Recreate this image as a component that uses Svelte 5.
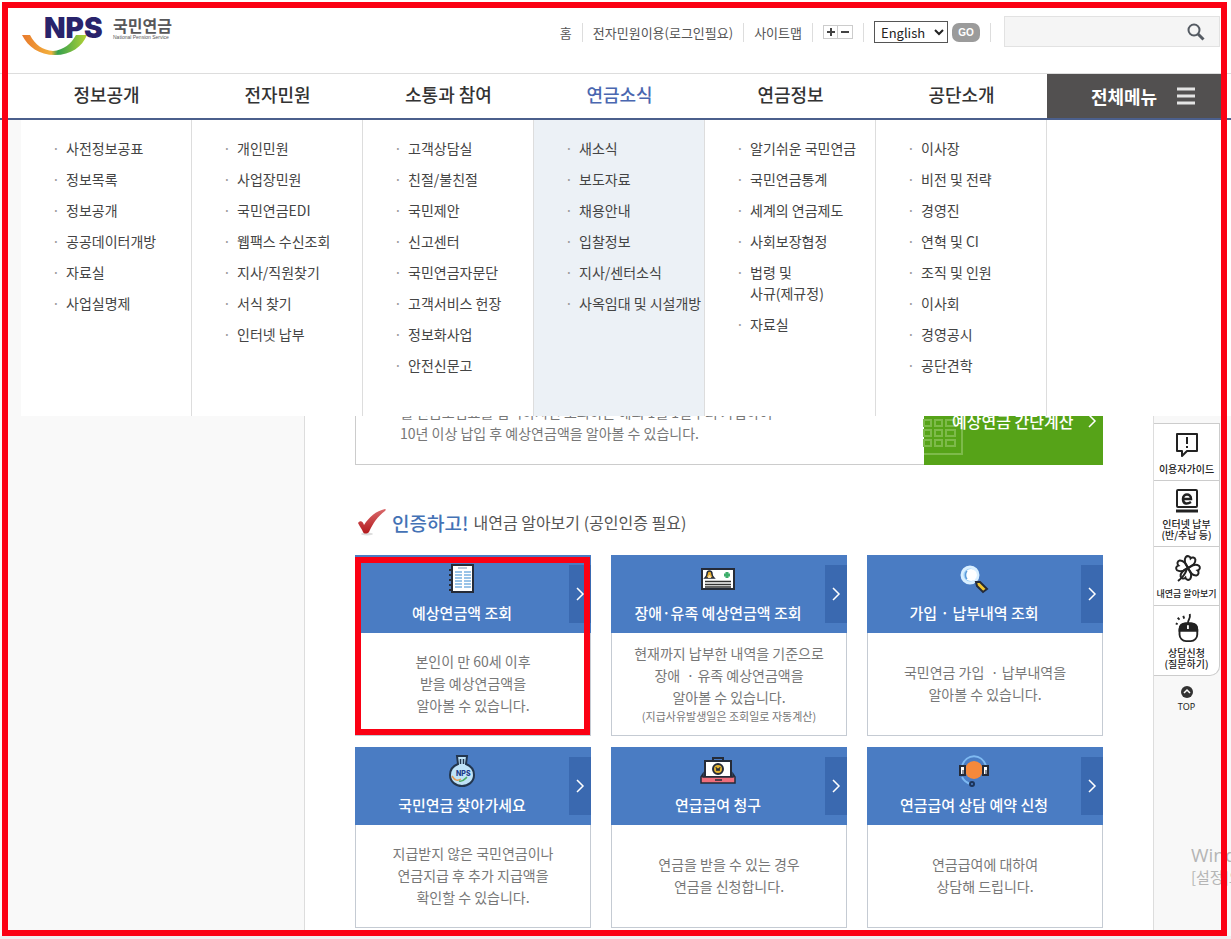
<script>
  let language = $state("English");
  let keyword = $state("");

  const menus = [
    {
      title: "정보공개",
      items: ["사전정보공표", "정보목록", "정보공개", "공공데이터개방", "자료실", "사업실명제"],
    },
    {
      title: "전자민원",
      items: ["개인민원", "사업장민원", "국민연금EDI", "웹팩스 수신조회", "지사/직원찾기", "서식 찾기", "인터넷 납부"],
    },
    {
      title: "소통과 참여",
      items: ["고객상담실", "친절/불친절", "국민제안", "신고센터", "국민연금자문단", "고객서비스 헌장", "정보화사업", "안전신문고"],
    },
    {
      title: "연금소식",
      active: true,
      items: ["새소식", "보도자료", "채용안내", "입찰정보", "지사/센터소식", "사옥임대 및 시설개방"],
    },
    {
      title: "연금정보",
      items: ["알기쉬운 국민연금", "국민연금통계", "세계의 연금제도", "사회보장협정", "법령 및\n사규(제규정)", "자료실"],
    },
    {
      title: "공단소개",
      items: ["이사장", "비전 및 전략", "경영진", "연혁 및 CI", "조직 및 인원", "이사회", "경영공시", "공단견학"],
    },
  ];

  const cards = [
    {
      icon: "note",
      title: "예상연금액 조회",
      lines: ["본인이 만 60세 이후", "받을 예상연금액을", "알아볼 수 있습니다."],
      marked: true,
    },
    {
      icon: "idcard",
      title: "장애·유족 예상연금액 조회",
      lines: ["현재까지 납부한 내역을 기준으로", "장애  · 유족 예상연금액을", "알아볼 수 있습니다."],
      small: "(지급사유발생일은 조회일로 자동계산)",
    },
    {
      icon: "magnifier",
      title: "가입 · 납부내역 조회",
      lines: ["국민연금 가입  · 납부내역을", "알아볼 수 있습니다."],
    },
    {
      icon: "bag",
      title: "국민연금 찾아가세요",
      lines: ["지급받지 않은 국민연금이나", "연금지급 후 추가 지급액을", "확인할 수 있습니다."],
    },
    {
      icon: "box",
      title: "연급급여 청구",
      lines: ["연금을 받을 수 있는 경우", "연금을 신청합니다."],
    },
    {
      icon: "headset",
      title: "연금급여 상담 예약 신청",
      lines: ["연금급여에 대하여", "상담해 드립니다."],
    },
  ];
</script>

<div class="page">
  <header>
    <div class="top">
      <a class="logo" href="#home">
        <svg width="88" height="42" viewBox="0 0 88 42">
          <defs>
            <linearGradient id="smile">
              <stop offset="0" stop-color="#e8792c" />
              <stop offset="0.45" stop-color="#f3b13c" />
              <stop offset="0.55" stop-color="#35a04e" />
              <stop offset="1" stop-color="#b5d334" />
            </linearGradient>
          </defs>
          <path d="M1 19h8c5 10 13 15 23 16 11-1 18-7 23-16h11C61 31 50 39 34 39 18 39 7 31 1 19z" fill="url(#smile)" />
          <text class="nps" x="23" y="22">NPS</text>
        </svg>
        <span class="name">
          <span class="ko">국민연금</span>
          <span class="en">National Pension Service</span>
        </span>
      </a>
      <ul class="util">
        <li><a href="#home">홈</a></li>
        <li><a href="#minwon">전자민원이용(로그인필요)</a></li>
        <li><a href="#sitemap">사이트맵</a></li>
        <li class="zoom">
          <button aria-label="글자 크게">
            <svg width="8" height="8" viewBox="0 0 8 8"><path d="M0 4h8M4 0v8" stroke="#444" stroke-width="2" /></svg>
          </button>
          <button aria-label="글자 작게">
            <svg width="8" height="8" viewBox="0 0 8 8"><path d="M0 4h8" stroke="#444" stroke-width="2" /></svg>
          </button>
        </li>
        <li class="lang">
          <select bind:value={language} aria-label="Language">
            <option>English</option>
            <option>中文</option>
            <option>日本語</option>
          </select>
          <button class="go">GO</button>
        </li>
      </ul>
      <form class="search" onsubmit={(e) => e.preventDefault()}>
        <input type="text" bind:value={keyword} aria-label="검색어" />
        <button aria-label="검색">
          <svg width="18" height="18" viewBox="0 0 18 18" fill="none" stroke="#555b63">
            <circle cx="7" cy="7" r="5.5" stroke-width="2" />
            <path d="M11 11l5.500 5.500" stroke-width="3" />
          </svg>
        </button>
      </form>
    </div>

    <nav class="gnb">
      {#each menus as menu}
        <a href="#menu" class:active={menu.active}>{menu.title}</a>
      {/each}
      <button class="all">
        <span>전체메뉴</span>
        <svg width="18" height="18" viewBox="0 0 18 18"><path d="M0 2h18M0 9h18M0 16h18" stroke="#e4e4e4" stroke-width="3" /></svg>
      </button>
    </nav>

    <div class="submenu">
      {#each menus as menu}
        <ul class:active={menu.active}>
          {#each menu.items as item}
            <li><a href="#sub">{item}</a></li>
          {/each}
        </ul>
      {/each}
    </div>
  </header>

  <div class="body">
    <div class="side"></div>

    <main>
      <section class="intro">
        <p>월 연금보험료를 입력하시면 조회하는 해의 1월 1일부터 가입하여<br />10년 이상 납입 후 예상연금액을 알아볼 수 있습니다.</p>
        <a class="calc" href="#calc">
          <svg class="calc-bg" width="40" height="56" viewBox="0 0 40 56" fill="none" stroke="#7dba4a">
            <path d="M0 1h38v53H0" stroke-width="2" />
            <path d="M0 20h7v6H0zM11 20h7v6h-7zM22 20h9v6h-9zM0 30h7v6H0zM11 30h7v6h-7zM22 30h9v6h-9zM0 40h7v6H0zM11 40h7v6h-7zM22 40h9v6h-9z" stroke-width="2" />
          </svg>
          <span>예상연금 간단계산</span>
          <svg width="9" height="14" viewBox="0 0 9 14"><path d="M1 1l6 6-6 6" fill="none" stroke="#fff" stroke-width="1.500" /></svg>
        </a>
      </section>

      <h2>
        <svg width="32" height="28" viewBox="0 0 32 28">
          <defs>
            <linearGradient id="tick" x2="0" y2="1">
              <stop offset="0" stop-color="#d9696b" />
              <stop offset="1" stop-color="#b3181c" />
            </linearGradient>
          </defs>
          <ellipse cx="12" cy="26" rx="6" ry="1.500" fill="#ddd" />
          <path d="M3 15c2-3 5-2 6 2C14 9 21 3 30 1c1 0 1 1 0 2-7 5-12 12-16 21-2 2-5 2-6 0-1-3-3-5-5-9z" fill="url(#tick)" />
        </svg>
        <strong>인증하고!</strong>
        <span>내연금 알아보기 (공인인증 필요)</span>
      </h2>

      <div class="cards">
        {#each cards as card}
          <a href="#card" class="card" class:marked={card.marked}>
            <div class="head">
              <div class="title">
                <div class="icon">
                  {#if card.icon === "note"}
                    <svg width="26" height="30" viewBox="0 0 26 30">
                      <path d="M3 1h21v27H3z" fill="#fff" stroke="#252b38" stroke-width="2" />
                      <path d="M0 6h4M0 11h4M0 16h4M0 21h4M0 26h4" stroke="#252b38" stroke-width="2" />
                      <path d="M9 4h9" stroke="#7b95b5" />
                      <path d="M6 8h7M6 11h7M6 14h7M6 17h7M6 20h7M6 23h7M15 8h7M15 11h7M15 14h7M15 17h7M15 20h7M15 23h7" stroke="#9ac4e8" stroke-width="2" />
                    </svg>
                  {:else if card.icon === "idcard"}
                    <svg width="34" height="22" viewBox="0 0 34 22">
                      <path d="M1 1h32v20H1z" fill="#fff" stroke="#252b38" stroke-width="2" />
                      <path d="M4 10c1-1 2-2 2-4 0-4 5-4 5 0 0 2 1 3 2 4z" fill="#e5ab2d" stroke="#252b38" stroke-width="1.500" />
                      <path d="M7 10c0-4 3-4 3 0z" fill="#ffe3b0" />
                      <path d="M26 4v6M23 7h6" stroke="#3fae6c" stroke-width="3" />
                      <path d="M4 13.500h26M4 16.500h26M4 19h26" stroke="#333" stroke-width="1.500" />
                    </svg>
                  {:else if card.icon === "magnifier"}
                    <svg width="28" height="28" viewBox="0 0 28 28">
                      <circle cx="10" cy="10" r="8" fill="#9fd0f7" stroke="#d9efff" stroke-width="3" />
                      <circle cx="11" cy="10" r="6" fill="#fff" />
                      <path d="M7 6c-2 2-2 6 0 8" fill="none" stroke="#5b9ad8" stroke-width="1.500" />
                      <path d="M16 17l4 0 7 7-4 3-6-6z" fill="#f0c530" stroke="#252b38" stroke-width="2" />
                    </svg>
                  {:else if card.icon === "bag"}
                    <svg width="26" height="32" viewBox="0 0 26 32">
                      <path d="M8 1h10l-1 8c5 2 8 6 8 11 0 7-6 11-12 11S1 27 1 20C1 15 4 11 9 9z" fill="#bfe3f8" stroke="#23364e" stroke-width="2" />
                      <path d="M11.500 4v5M14.500 4v5" stroke="#23364e" stroke-width="1.500" />
                      <path d="M3 21c3 5 6 5 9 3" fill="none" stroke="#e49b52" stroke-width="1.500" />
                      <path d="M10 26c4 1 6-2 8-4" fill="none" stroke="#4fac64" stroke-width="1.500" />
                      <text class="mini" x="7" y="21">NPS</text>
                    </svg>
                  {:else if card.icon === "box"}
                    <svg width="36" height="28" viewBox="0 0 36 28">
                      <path d="M13 4V1h10v3" fill="none" stroke="#252b38" stroke-width="2" />
                      <path d="M5 4h26v16H5z" fill="#fff" stroke="#252b38" stroke-width="2" />
                      <circle cx="18" cy="12" r="5" fill="#e3b22f" stroke="#252b38" stroke-width="2" />
                      <path d="M16 10l1 4 1-3 1 3 1-4" fill="none" stroke="#252b38" />
                      <path d="M1 20l2-3v3h30v-3l2 3v6H1z" fill="#ef6e7c" stroke="#252b38" stroke-width="1.500" />
                      <path d="M15 23h7" stroke="#252b38" stroke-width="1.500" />
                    </svg>
                  {:else}
                    <svg width="32" height="32" viewBox="0 0 32 32">
                      <path d="M4 11C8-2 24-2 28 11M4 22c2 4 5 6 9 7" fill="none" stroke="#7fbaf2" stroke-width="2" />
                      <circle cx="16" cy="15" r="9" fill="#f5893b" />
                      <path d="M2 11h5v9H2zM25 11h5v9h-5z" fill="#fff" stroke="#252b38" stroke-width="2" />
                      <path d="M5 15v5M28 15v5" stroke="#252b38" />
                      <circle cx="14" cy="29" r="2" fill="#4b7cc3" stroke="#1c3358" stroke-width="2" />
                    </svg>
                  {/if}
                </div>
                <h3>{card.title}</h3>
              </div>
              <div class="arrow">
                <svg width="9" height="14" viewBox="0 0 9 14"><path d="M1 1l6 6-6 6" fill="none" stroke="#fff" stroke-width="1.500" /></svg>
              </div>
            </div>
            <div class="desc">
              {#each card.lines as line}
                <p>{line}</p>
              {/each}
              {#if card.small}
                <p class="small">{card.small}</p>
              {/if}
            </div>
          </a>
        {/each}
      </div>
    </main>

    <aside>
      <div class="quick">
        <a href="#guide">
          <svg width="24" height="26" viewBox="0 0 24 26" fill="none" stroke="#222" stroke-width="2">
            <path d="M2 2h20v17H12l-5 5v-5H2z" stroke-linejoin="round" />
            <path d="M12 5v7M12 14v2" />
          </svg>
          <span>이용자가이드</span>
        </a>
        <a href="#pay">
          <svg width="24" height="24" viewBox="0 0 24 24" fill="none" stroke="#222" stroke-width="2">
            <rect x="2" y="1" width="20" height="17" rx="1" />
            <path d="M8 10h8c0-6-8-6-8 0s5 5 8 3" stroke-width="2.500" />
            <path d="M1 22h22" stroke-width="3" />
          </svg>
          <span>인터넷 납부<br />(반/추납 등)</span>
        </a>
        <a href="#mine">
          <svg width="28" height="28" viewBox="0 0 28 28" fill="none" stroke="#222" stroke-width="2">
            {#each [15, 105, 195, 285] as angle}
              <path d="M15 13C10 9 9 6 10 3c1-2 4-2 5 0 1-2 4-2 5 0 1 3 0 6-5 10z" transform="rotate({angle} 15 13)" />
            {/each}
            <path d="M14 14c-2 6-5 9-9 12" />
          </svg>
          <span class="tight">내연금 알아보기</span>
        </a>
        <a href="#ask">
          <svg width="26" height="28" viewBox="0 0 26 30" fill="none" stroke="#222" stroke-width="2">
            <path d="M14 10c0-5 3-4 2-10" />
            <rect x="5" y="10" width="19" height="19" rx="7" />
            <path d="M5 18v-2c0-4 3-6 6-6h7c3 0 6 2 6 6v2z" fill="#222" />
            <path d="M14 12v4" stroke="#fff" />
            <path d="M1 10l2 1M3 4l2 2M9 2l1 3" />
          </svg>
          <span>상담신청<br />(질문하기)</span>
        </a>
      </div>
      <a class="to-top" href="#top">
        <svg width="12" height="12" viewBox="0 0 12 12">
          <circle cx="6" cy="6" r="6" fill="#333" />
          <path d="M3 7l3-3 3 3" fill="none" stroke="#fff" stroke-width="1.500" />
        </svg>
        TOP
      </a>
    </aside>
  </div>

  <div class="watermark">
    <p class="big">Windows</p>
    <p>[설정]으로</p>
  </div>
  <div class="frame"></div>
</div>

<style>
  :global(body) {
    margin: 0;
    background: #fff;
  }

  .page {
    position: relative;
    min-height: 100vh;
    overflow: hidden;
    display: flex;
    flex-direction: column;
    box-sizing: border-box;
    border-bottom: 3px solid #f0eef0;
    font-family: "Noto Sans CJK KR", sans-serif;
    font-size: 14px;
    color: #444;
  }

  a {
    color: inherit;
    text-decoration: none;
  }
  ul,
  p,
  h2,
  h3 {
    margin: 0;
    padding: 0;
    list-style: none;
    font-weight: 400;
  }
  button {
    border: 0;
    padding: 0;
    background: none;
    font-family: inherit;
    cursor: pointer;
  }
  svg {
    display: block;
    flex: none;
    overflow: visible;
  }

  header {
    position: relative;
    z-index: 2;
    background: #fff;
  }
  .top {
    display: flex;
    align-items: flex-start;
    height: 57px;
    padding: 16px 11px 0 21px;
    border-bottom: 1px solid #ddd;
  }
  .logo {
    display: flex;
    gap: 4px;
    margin-right: auto;
  }
  .nps {
    font: 900 28px Inter, sans-serif;
    fill: #29236b;
  }
  .name {
    display: flex;
    flex-direction: column;
    color: #58585a;
  }
  .ko {
    font-size: 16px;
    font-weight: 700;
    line-height: 18px;
  }
  .en {
    font-family: "Liberation Sans", sans-serif;
    font-size: 5px;
    line-height: 6px;
  }

  .util {
    display: flex;
    align-items: center;
    height: 32px;
    font-size: 13px;
    line-height: 17px;
    color: #555;
  }
  .util li {
    display: flex;
    align-items: center;
    height: 19px;
    padding: 0 10px;
    border-right: 1px solid #ddd;
  }
  .zoom button {
    display: flex;
    align-items: center;
    justify-content: center;
    width: 15px;
    height: 14px;
    border: 1px solid #ccc;
  }
  .zoom button + button {
    border-left: 0;
  }
  .lang {
    gap: 4px;
  }
  select {
    width: 74px;
    height: 22px;
    padding: 0 0 0 2px;
    border: 1px solid #555;
    border-radius: 0;
    background: #fff;
    font-family: "Noto Sans CJK KR", sans-serif;
    font-size: 13px;
    color: #222;
  }
  .go {
    width: 28px;
    height: 19px;
    border-radius: 7px;
    background: #9b9b9b;
    color: #fff;
    font: 700 10px "Liberation Sans", sans-serif;
  }

  .search {
    display: flex;
    box-sizing: border-box;
    width: 216px;
    height: 31px;
    margin-left: 13px;
    border: 1px solid #e2e2e2;
    background: #f5f5f5;
  }
  .search input {
    flex: 1;
    min-width: 0;
    border: 0;
    padding: 0 8px;
    background: none;
  }
  .search button {
    padding: 0 14px 0 6px;
  }

  .gnb,
  .submenu {
    display: grid;
    grid-template-columns: repeat(6, 1fr) 174px;
  }
  .gnb {
    height: 44px;
    padding: 0 10px 0 21px;
    border-bottom: 2px solid #4b5f8c;
    font-size: 18px;
    font-weight: 500;
    line-height: 40px;
    text-align: center;
    color: #333;
  }
  .gnb .active {
    color: #4a67b0;
  }
  .all {
    display: flex;
    align-items: center;
    justify-content: center;
    gap: 20px;
    padding-left: 18px;
    background: #525050;
    color: #fff;
    font-size: 18px;
    font-weight: 700;
  }

  .submenu {
    position: absolute;
    top: 100%;
    left: 21px;
    right: 0;
    padding-right: 10px;
    background: #fff;
  }
  .submenu ul {
    min-width: 0;
    padding: 18px 0 30px 31px;
    overflow: hidden;
    border-right: 1px solid #ddd;
    line-height: 21px;
  }
  .submenu ul.active {
    background: #ecf1f6;
  }
  .submenu li {
    display: flex;
    margin-bottom: 10px;
    white-space: pre;
  }
  .submenu li::before {
    content: "·";
    width: 14px;
    flex: none;
    color: #999;
  }

  .body {
    flex: 1;
    display: flex;
  }
  .side {
    width: 304px;
    border-right: 1px solid #ddd;
    background: #f9f9f9;
  }
  main {
    flex: 1;
    min-width: 0;
    padding: 257px 50px 8px;
  }

  .intro {
    display: flex;
    height: 88px;
  }
  .intro p {
    flex: 1;
    padding: 24px 0 0 44px;
    border: 1px solid #ccc;
    border-right: 0;
    line-height: 21px;
    color: #777;
  }
  .calc {
    position: relative;
    display: flex;
    align-items: center;
    justify-content: space-between;
    box-sizing: border-box;
    width: 179px;
    padding: 0 6px 0 28px;
    background: #56a318;
    color: #fff;
    font-size: 16px;
    font-weight: 500;
  }
  .calc span {
    position: relative;
  }
  .calc-bg {
    position: absolute;
    left: 0;
    bottom: 9px;
  }

  h2 {
    display: flex;
    align-items: center;
    height: 30px;
    margin: 42px 0 18px;
    font-size: 16px;
    color: #555;
  }
  h2 strong {
    margin: 0 5px;
    font-size: 19px;
    font-weight: 500;
    color: #4472b5;
  }

  .cards {
    display: grid;
    grid-template-columns: repeat(3, 1fr);
    gap: 11px 20px;
  }
  .card {
    position: relative;
    display: flex;
    flex-direction: column;
    height: 181px;
  }
  .marked::after {
    content: "";
    position: absolute;
    inset: 2px 1px 1px 0;
    border: 6px solid #fb0013;
  }
  .head {
    display: flex;
    height: 78px;
    background: #4a7cc3;
  }
  .title {
    flex: 1;
    color: #fff;
    text-align: center;
  }
  .icon {
    display: flex;
    align-items: center;
    justify-content: center;
    height: 48px;
  }
  h3 {
    font-size: 15px;
    font-weight: 500;
    line-height: 20px;
  }
  .arrow {
    display: flex;
    align-items: center;
    justify-content: center;
    width: 22px;
    margin: 10px 0;
    background: #3a69b0;
  }
  .desc {
    flex: 1;
    display: flex;
    flex-direction: column;
    justify-content: center;
    padding-bottom: 3px;
    border: 1px solid #c5cbd3;
    border-top: 0;
    text-align: center;
    line-height: 22px;
    color: #777;
    white-space: pre;
  }
  .small {
    font-size: 11px;
    line-height: 16px;
  }
  .mini {
    font: 800 7px Inter, sans-serif;
    fill: #1d3a8a;
  }

  aside {
    width: 77px;
    border-left: 1px solid #ddd;
    background: #f8f8f8;
    padding-top: 303px;
    font-size: 10px;
    line-height: 11px;
    text-align: center;
    color: #222;
  }
  .quick {
    width: 65px;
    border: 1px solid #ccc;
    border-left: 0;
    border-radius: 0 0 10px 0;
    background: #fff;
  }
  .quick a {
    display: flex;
    flex-direction: column;
    align-items: center;
    gap: 5px;
    padding: 8px 0 6px;
    font-weight: 500;
    white-space: nowrap;
  }
  .quick a + a {
    border-top: 1px solid #ccc;
  }
  .tight {
    font-size: 9px;
  }
  .to-top {
    display: flex;
    flex-direction: column;
    align-items: center;
    gap: 3px;
    width: 65px;
    padding-top: 10px;
    font-family: "Noto Sans", sans-serif;
    font-size: 9px;
  }

  .watermark {
    position: absolute;
    right: 0;
    bottom: 48px;
    z-index: 3;
    width: 40px;
    overflow: hidden;
    white-space: nowrap;
    font-size: 15px;
    line-height: 22px;
    color: #b5b5b5;
  }
  .big {
    font-family: "Open Sans", sans-serif;
    font-size: 19px;
  }
  .frame {
    position: absolute;
    inset: 2px 4px 0 2px;
    z-index: 4;
    border: 6px solid #fb0013;
    pointer-events: none;
  }
</style>
